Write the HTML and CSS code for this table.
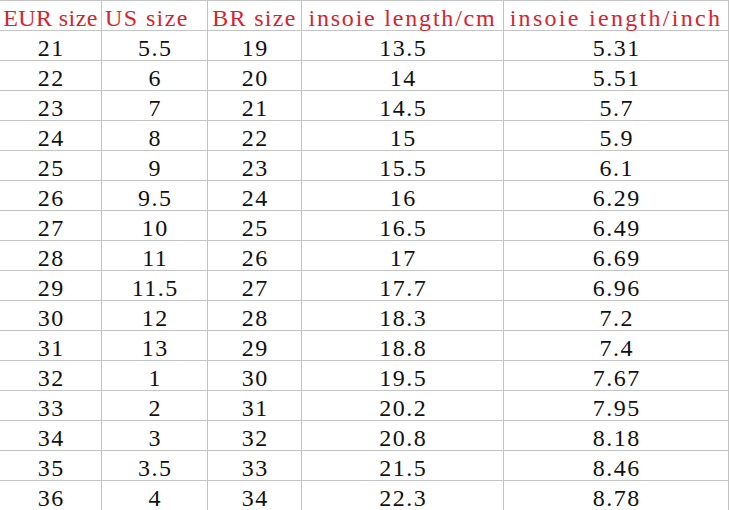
FILE: index.html
```html
<!DOCTYPE html>
<html>
<head>
<meta charset="utf-8">
<link rel="stylesheet" href="styles.css">
</head>
<body>
<div class="sheet">
  <div class="cell head h1">EUR size</div>
  <div class="cell head h2">US size</div>
  <div class="cell head h3">BR size</div>
  <div class="cell head h4">insoie length/cm</div>
  <div class="cell head h5">insoie iength/inch</div>

  <div class="cell">21</div><div class="cell">5.5</div><div class="cell">19</div><div class="cell">13.5</div><div class="cell">5.31</div>
  <div class="cell">22</div><div class="cell">6</div><div class="cell">20</div><div class="cell">14</div><div class="cell">5.51</div>
  <div class="cell">23</div><div class="cell">7</div><div class="cell">21</div><div class="cell">14.5</div><div class="cell">5.7</div>
  <div class="cell">24</div><div class="cell">8</div><div class="cell">22</div><div class="cell">15</div><div class="cell">5.9</div>
  <div class="cell">25</div><div class="cell">9</div><div class="cell">23</div><div class="cell">15.5</div><div class="cell">6.1</div>
  <div class="cell">26</div><div class="cell">9.5</div><div class="cell">24</div><div class="cell">16</div><div class="cell">6.29</div>
  <div class="cell">27</div><div class="cell">10</div><div class="cell">25</div><div class="cell">16.5</div><div class="cell">6.49</div>
  <div class="cell">28</div><div class="cell">11</div><div class="cell">26</div><div class="cell">17</div><div class="cell">6.69</div>
  <div class="cell">29</div><div class="cell">11.5</div><div class="cell">27</div><div class="cell">17.7</div><div class="cell">6.96</div>
  <div class="cell">30</div><div class="cell">12</div><div class="cell">28</div><div class="cell">18.3</div><div class="cell">7.2</div>
  <div class="cell">31</div><div class="cell">13</div><div class="cell">29</div><div class="cell">18.8</div><div class="cell">7.4</div>
  <div class="cell">32</div><div class="cell">1</div><div class="cell">30</div><div class="cell">19.5</div><div class="cell">7.67</div>
  <div class="cell">33</div><div class="cell">2</div><div class="cell">31</div><div class="cell">20.2</div><div class="cell">7.95</div>
  <div class="cell">34</div><div class="cell">3</div><div class="cell">32</div><div class="cell">20.8</div><div class="cell">8.18</div>
  <div class="cell">35</div><div class="cell">3.5</div><div class="cell">33</div><div class="cell">21.5</div><div class="cell">8.46</div>
  <div class="cell">36</div><div class="cell">4</div><div class="cell">34</div><div class="cell">22.3</div><div class="cell">8.78</div>
</div>
</body>
</html>
```

FILE: styles.css
```css
html, body {
  margin: 0;
  padding: 0;
  background: #ffffff;
}

.sheet {
  display: grid;
  grid-template-columns: 102px 106px 94px 202px 225px;
  grid-auto-rows: 30px;
  border-top: 1px solid #c4c4c4;
  width: 729px;
  font-family: "Liberation Serif", "Times New Roman", serif;
  font-size: 24px;
  color: #111111;
}

.cell {
  box-sizing: border-box;
  border-right: 1px solid #c4c4c4;
  border-bottom: 1px solid #c4c4c4;
  text-align: center;
  line-height: 24px;
  padding-top: 5px;
  white-space: nowrap;
  overflow: visible;
  letter-spacing: 1.5px;
  text-indent: 1.5px;
}

.head {
  color: #d8232e;
  text-indent: 0;
}

.h1 { letter-spacing: 0.4px; }
.h2 { letter-spacing: 1.4px; text-align: left; padding-left: 3px; }
.h3 { letter-spacing: 1.3px; }
.h4 { letter-spacing: 1.8px; }
.h5 { letter-spacing: 2.3px; }
```
